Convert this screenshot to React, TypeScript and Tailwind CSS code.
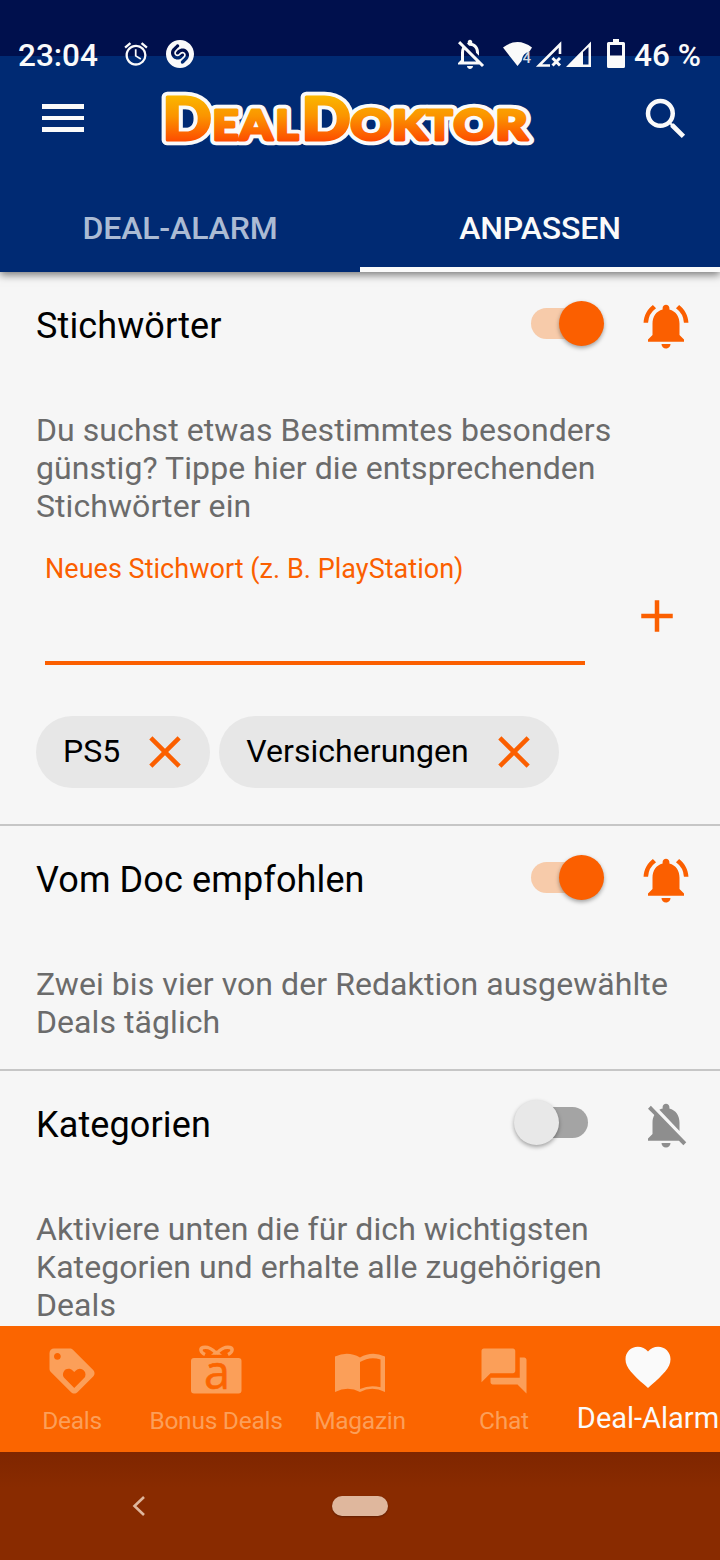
import { MdAlarm, MdNotificationsActive, MdNotificationsOff, MdOutlineNotificationsOff, MdAdd, MdClose, MdLoyalty, MdForum, MdFavorite, MdSearch } from 'react-icons/md';
import { SiShazam } from 'react-icons/si';
import type { ReactNode } from 'react';

type Glyph = { c: string; x: number; w: number; size: number };

const LOGO: Glyph[] = [
  { c: 'D', x: 2.5, w: 49, size: 59 },
  { c: 'E', x: 52.5, w: 26, size: 41 },
  { c: 'A', x: 79.5, w: 33, size: 41 },
  { c: 'L', x: 115.5, w: 23, size: 41 },
  { c: 'D', x: 141.5, w: 49, size: 59 },
  { c: 'O', x: 190.5, w: 41, size: 42 },
  { c: 'K', x: 232, w: 35, size: 41 },
  { c: 'T', x: 266.5, w: 26, size: 41 },
  { c: 'O', x: 293.5, w: 41, size: 42 },
  { c: 'R', x: 335.5, w: 32, size: 41 },
];

function LogoLayer({ fill, stroke, width }: { fill: string; stroke: string; width: number }) {
  return (
    <g fill={fill} stroke={stroke} strokeWidth={width} strokeLinejoin="round">
      {LOGO.map((g, i) => (
        <text key={i} x={g.x} y={48.5} fontSize={g.size} textLength={g.w} lengthAdjust="spacingAndGlyphs">
          {g.c}
        </text>
      ))}
    </g>
  );
}

function Logo() {
  return (
    <svg width="384" height="88" viewBox="0 -16 384 88" className="-mt-4 font-['Lato',sans-serif] font-black">
      <defs>
        <linearGradient id="logo" gradientUnits="userSpaceOnUse" x1="0" y1="5" x2="0" y2="50">
          <stop offset="0" stopColor="#fab600" />
          <stop offset="0.45" stopColor="#fb9400" />
          <stop offset="1" stopColor="#fd4d00" />
        </linearGradient>
      </defs>
      <LogoLayer fill="#fafafa" stroke="#fafafa" width={10.5} />
      <LogoLayer fill="url(#logo)" stroke="url(#logo)" width={3} />
    </svg>
  );
}

function StatusIcons() {
  return (
    <svg width="130" height="36" viewBox="0 0 130 36" className="ml-3 mr-1" fill="#fafafa">
      <path d="M3 11.500Q17.500 0.500 32 11.500L29.500 15.500Q22.500 17 21.500 25L17.500 30Z" />
      <text x="22.500" y="27.200" fontSize="15" fontWeight="500" opacity="0.85">4</text>
      <path d="M60 18V8.500L39 29.500H50" fill="none" stroke="#fafafa" strokeWidth="2.600" />
      <path d="M52.500 22l7.500 7.500M60 22l-7.500 7.500" stroke="#fafafa" strokeWidth="3" />
      <path fillRule="evenodd" d="M91 5.500V31H66ZM83 16V28.500H88.500V11Z" />
      <path fillRule="evenodd" d="M113 3h6v3h4.500q1.500 0 1.500 1.500v23q0 1.500-1.500 1.500h-15q-1.500 0-1.500-1.500v-23q0-1.500 1.500-1.500h4.500zM110 9v10.500h12V9z" />
    </svg>
  );
}

function GiftIcon() {
  return (
    <svg width="52" height="80" viewBox="0 -13 52 80" className="shrink-0">
      <rect x="1" y="14" width="50.500" height="35.500" rx="3" fill="currentColor" />
      <path d="M26.500 9.500C23 5 17.500 2.500 13 3.500 9.500 4.500 10.500 8.500 15 10.500M26.500 9.500C30 5 35.500 2.500 40 3.500 43.500 4.500 42.500 8.500 38 10.500" fill="none" stroke="currentColor" strokeWidth="3.400" />
      <path d="M21 10.800L26.500 6.500L32 10.800Z" fill="currentColor" />
      <text x="14" y="44.600" fontSize="48" textLength="26" lengthAdjust="spacingAndGlyphs" className="font-['Open_Sans',sans-serif]" fill="#fb6500" stroke="#fb6500" strokeWidth="0.600">a</text>
    </svg>
  );
}

function BookIcon() {
  return (
    <svg width="52" height="54" viewBox="0 0 52 54" fill="currentColor">
      <path
        fillRule="evenodd"
        d="M1 12.500Q14 6.500 26 13.500Q38 6.500 51 12.500V48Q38 41.500 26 48Q14 41.500 1 48ZM26 18V45Q36 40.500 46.500 43.300V15.500Q36 12 26 18Z"
      />
    </svg>
  );
}

function Switch({ on }: { on: boolean }) {
  return (
    <div className={`relative h-[31px] w-[57px] rounded-full ${on ? 'bg-[#f7cbaa]' : 'bg-[#a4a4a4]'}`}>
      <div
        className={`absolute -top-[7px] size-[45px] rounded-full shadow-[0_2px_4px_rgba(0,0,0,0.35)] ${
          on ? 'left-[28px] bg-[#fb5f00]' : '-left-[17px] bg-[#e8e8e8]'
        }`}
      />
    </div>
  );
}

function Section({ title, on, text, children }: { title: string; on: boolean; text: string[]; children?: ReactNode }) {
  return (
    <section className="border-b-2 border-[#c6c6c6] pb-[28px]">
      <div className="flex h-[108px] items-center pl-9 pr-[27px]">
        <h2 className="flex-1 text-[36px] leading-[42px] tracking-[0.12px] text-black">{title}</h2>
        <div className="-mt-[5px] mr-[51px]">
          <Switch on={on} />
        </div>
        {on ? <MdNotificationsActive size={54} color="#fb5f00" /> : <MdNotificationsOff size={54} color="#8e8e8e" />}
      </div>
      <p className="mt-[31px] whitespace-nowrap pl-9 text-[32px] leading-[38px] tracking-[0.07px] text-[#6b6b6b]">
        {text.map((t) => (
          <span key={t} className="block">{t}</span>
        ))}
      </p>
      {children}
    </section>
  );
}

function Chip({ label }: { label: string }) {
  return (
    <div className="flex h-[72px] items-center justify-between rounded-full bg-[#e7e7e7] pl-[27px] pr-[18px]">
      <span className="-mt-0.5 mr-[18px] text-[32px] tracking-[0.04px] text-black">{label}</span>
      <MdClose size={54} color="#fb5f00" />
    </div>
  );
}

function NavItem({ label, children }: { label: string; children: ReactNode }) {
  return (
    <div className="flex w-36 flex-col items-center pt-[18px] text-[#fb9f59]">
      <div className="flex h-[54px] items-center">{children}</div>
      <span className="mt-[8px] whitespace-nowrap text-[24.5px] leading-[30px] tracking-[-0.25px]">{label}</span>
    </div>
  );
}

export default function App() {
  return (
    <div className="flex h-[1560px] w-[720px] flex-col overflow-hidden bg-[#f6f6f6] font-['Roboto',sans-serif]">
      <header className="relative z-10 h-[272px] shrink-0 bg-[linear-gradient(#00104d_56px,#002a73_56px)] text-[#fafafa] shadow-[0_3px_8px_rgba(0,0,0,0.5)]">
        <div className="flex h-20 items-end justify-between pl-[18px] pr-[19px]">
          <div className="flex h-[52px] items-center">
            <span className="w-[104px] pt-[3px] text-[31.5px] font-medium">23:04</span>
            <MdAlarm size={28} />
            <SiShazam size={28} className="ml-4" />
          </div>
          <div className="flex h-[52px] items-center">
            <MdOutlineNotificationsOff size={36} />
            <StatusIcons />
            <span className="w-[67px] whitespace-nowrap pt-[3px] text-[31.5px] font-medium">46 %</span>
          </div>
        </div>
        <div className="flex h-[104px] items-start pl-[42px] pr-[27px] pt-[8px]">
          <div className="mt-4 flex w-[42px] flex-col gap-[7px]">
            <div className="h-[4.5px] bg-[#fafafa]" />
            <div className="h-[4.5px] bg-[#fafafa]" />
            <div className="h-[4.5px] bg-[#fafafa]" />
          </div>
          <div className="ml-[76px] mt-[3px] flex-1"><Logo /></div>
          <MdSearch size={54} className="mt-[4px]" />
        </div>
        <div className="flex h-[88px] text-[32px] font-medium tracking-[-0.15px]">
          <div className="flex flex-1 items-center justify-center text-[#abbbd4]">DEAL-ALARM</div>
          <div className="flex flex-1 items-center justify-center border-b-[5px] border-[#fafafa] pt-[5px]">ANPASSEN</div>
        </div>
      </header>

      <main className="h-[1054px] shrink-0 overflow-hidden">
        <Section title="Stichwörter" on text={['Du suchst etwas Bestimmtes besonders', 'günstig? Tippe hier die entsprechenden', 'Stichwörter ein']}>
          <div className="flex h-[140px] items-start justify-between pl-[45px] pr-[36px]">
            <div className="h-full w-[540px] border-b-[4px] border-[#fb5f00] pt-[28px] text-[27px] leading-8 tracking-[0.03px] text-[#fb5f00]">
              Neues Stichwort (z. B. PlayStation)
            </div>
            <MdAdd size={54} color="#fb5f00" className="mt-16" />
          </div>
          <div className="mb-2 mt-[51px] flex gap-[9px] pl-9">
            <Chip label="PS5" />
            <Chip label="Versicherungen" />
          </div>
        </Section>
        <Section title="Vom Doc empfohlen" on text={['Zwei bis vier von der Redaktion ausgewählte', 'Deals täglich']} />
        <Section title="Kategorien" on={false} text={['Aktiviere unten die für dich wichtigsten', 'Kategorien und erhalte alle zugehörigen', 'Deals']} />
      </main>

      <nav className="flex h-[126px] shrink-0 bg-[#fb6500]">
        <NavItem label="Deals"><MdLoyalty size={54} /></NavItem>
        <NavItem label="Bonus Deals"><GiftIcon /></NavItem>
        <NavItem label="Magazin"><BookIcon /></NavItem>
        <NavItem label="Chat"><MdForum size={54} /></NavItem>
        <div className="flex w-36 flex-col items-center pt-[14px] text-[#fafafa]">
          <MdFavorite size={54} />
          <span className="mt-[7px] whitespace-nowrap text-[29px] leading-[34px]">Deal-Alarm</span>
        </div>
      </nav>

      <footer className="flex h-[108px] shrink-0 items-center bg-[linear-gradient(#7f2600,#892b00_36px)] pl-[132px]">
        <svg width="14" height="20" viewBox="0 0 14 20" fill="none" stroke="#dfb79d" strokeWidth="2.600">
          <path d="M12 1L2.500 10L12 19" />
        </svg>
        <div className="ml-[186px] h-5 w-14 rounded-full bg-[#dfb79d] shadow-[0_1px_2px_rgba(0,0,0,0.3)]" />
      </footer>
    </div>
  );
}
